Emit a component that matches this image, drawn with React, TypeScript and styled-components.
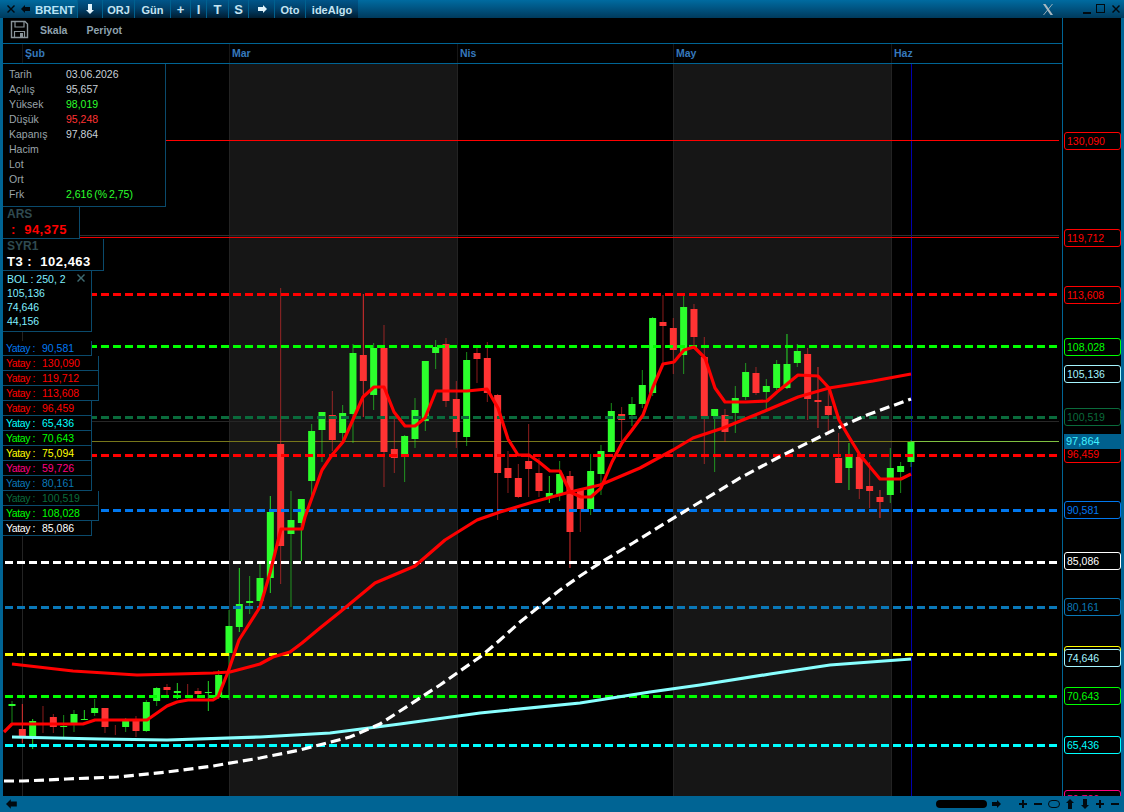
import { createGlobalStyle, styled } from "styled-components";

const GlobalStyle = createGlobalStyle`
    html, body {
        margin: 0;
        padding: 0;
        background: #000;
    }
    #root {
        width: 1124px;
        height: 812px;
        overflow: hidden;
    }
`;

const FONT = `"Liberation Sans", Arial, sans-serif`;
const BLUE = "#006494";
const PLOT_TOP = 64;

const GREEN = "#2cff2c";
const RED = "#ff3333";

// [body top, body bottom, wick top, wick bottom, up?, bright wick?]
type Candle = [number, number, number, number, boolean, boolean?];

const candles: Candle[] = [
    [704, 706, 701, 724, true],
    [729, 736, 704, 743, false, true],
    [721, 737, 719, 749, true, true],
    [733, 733, 706, 733, false],
    [717, 727, 714, 733, false],
    [726, 727, 715, 737, true],
    [714, 723, 710, 732, true],
    [719, 720, 710, 720, true, true],
    [708, 713, 699, 716, true],
    [708, 727, 708, 733, false],
    [735, 735, 725, 735, false],
    [719, 727, 718, 732, true],
    [720, 731, 716, 737, false],
    [702, 731, 700, 732, true],
    [688, 701, 687, 706, true],
    [687, 690, 684, 695, false],
    [691, 693, 683, 699, true, true],
    [695, 695, 684, 695, false],
    [691, 694, 688, 697, false],
    [692, 693, 681, 711, true, true],
    [675, 697, 670, 699, true],
    [626, 653, 610, 700, true],
    [604, 627, 568, 632, true, true],
    [601, 603, 576, 614, true],
    [578, 601, 563, 603, true],
    [512, 578, 496, 593, true, true],
    [444, 546, 288, 584, false],
    [520, 534, 491, 607, true],
    [499, 523, 499, 561, true, true],
    [431, 481, 424, 497, true],
    [412, 430, 412, 462, true],
    [415, 440, 391, 451, false],
    [413, 433, 405, 443, true],
    [353, 414, 344, 443, true],
    [355, 381, 294, 417, false, true],
    [348, 395, 343, 410, true],
    [348, 452, 325, 487, false],
    [449, 458, 418, 473, false],
    [436, 457, 435, 482, true],
    [410, 439, 398, 448, true],
    [361, 421, 361, 431, true],
    [347, 353, 340, 369, true],
    [344, 401, 338, 407, false],
    [399, 432, 381, 448, false],
    [360, 437, 352, 446, true],
    [353, 359, 345, 383, false],
    [358, 393, 342, 402, false],
    [395, 473, 394, 520, false],
    [468, 478, 451, 493, false],
    [478, 497, 464, 498, false],
    [461, 469, 424, 497, false],
    [473, 491, 458, 497, false],
    [493, 497, 476, 503, true, true],
    [474, 494, 461, 501, true],
    [476, 532, 471, 568, false, true],
    [489, 509, 488, 532, false],
    [471, 509, 454, 515, true],
    [451, 474, 445, 495, true],
    [411, 452, 403, 452, true],
    [414, 420, 407, 443, false],
    [404, 415, 397, 426, true],
    [385, 404, 370, 408, true],
    [318, 393, 317, 396, true],
    [322, 326, 295, 365, false],
    [328, 350, 318, 374, false],
    [307, 355, 295, 374, true],
    [309, 337, 304, 347, false],
    [357, 416, 337, 464, false],
    [409, 416, 409, 472, true],
    [415, 432, 409, 442, false],
    [398, 413, 386, 433, true],
    [372, 397, 363, 400, true],
    [373, 393, 367, 395, false],
    [386, 392, 379, 410, true],
    [364, 388, 360, 390, true],
    [364, 388, 334, 389, true, true],
    [351, 363, 344, 367, true],
    [354, 399, 348, 420, false],
    [400, 402, 367, 428, false, true],
    [406, 415, 388, 435, false],
    [458, 483, 433, 483, false],
    [454, 468, 443, 490, true, true],
    [457, 489, 453, 499, false],
    [486, 491, 462, 508, false],
    [497, 502, 490, 518, false, true],
    [468, 495, 448, 503, true],
    [466, 472, 462, 493, true],
    [442, 462, 440, 467, true],
];

const fastMa =
    "4,732 12,724 83,724 95,720 147,720 167,706 177,702 188,700 213,700 218,697 228,672 239,640 260,607 270,573 281,529 302,529 305,517 322,470 332,455 343,442 363,397 374,387 384,387 394,412 405,426 415,426 425,418 436,391 467,391 487,389 498,408 508,439 518,455 529,455 539,462 550,471 560,471 570,492 581,497 591,497 601,488 612,462 622,443 632,430 643,415 653,387 663,364 674,362 684,350 694,347 705,358 715,388 725,402 746,402 767,401 777,392 787,384 798,375 818,376 829,388 839,420 849,437 860,455 870,467 880,479 901,479 911,474";
const slowMa =
    "12,664 73,671 137,675 177,674 213,673 230,672 260,664 273,657 290,652 302,643 320,628 340,612 375,583 415,566 445,540 477,520 500,512 533,502 570,492 600,485 640,468 673,450 693,438 723,428 760,413 798,397 829,388 873,381 911,374";
const whiteMa =
    "4,781 23,781 67,779 117,777 167,772 213,766 260,758 300,750 350,737 380,724 400,711 440,685 480,657 500,640 520,622 540,606 560,590 580,576 600,563 633,543 667,522 700,502 740,478 783,455 840,427 867,415 911,399";
const cyanMa =
    "12,737 100,739 167,740 260,737 330,733 400,724 480,713 580,703 650,692 700,685 770,674 830,665 911,659";

const dashedLevels = [
    { y: 294.5, color: "#ff0000" },
    { y: 346.5, color: "#00ff00" },
    { y: 417.5, color: "#0a6b3c" },
    { y: 455.5, color: "#ff0000" },
    { y: 510.5, color: "#0078f0" },
    { y: 562.5, color: "#ffffff" },
    { y: 607.5, color: "#0a78b8" },
    { y: 654.5, color: "#ffff00" },
    { y: 696.5, color: "#00ff00" },
    { y: 745.5, color: "#00ffff" },
];

// the yellow tag has no text: 74,646 lies right over it in the terminal
const axisLabels = [
    { y: 132, text: "130,090", color: "#ff0000" },
    { y: 229, text: "119,712", color: "#ff0000" },
    { y: 286, text: "113,608", color: "#ff0000" },
    { y: 338, text: "108,028", color: "#00ff00" },
    { y: 365, text: "105,136", color: "#a5f5ff" },
    { y: 408, text: "100,519", color: "#0a6b3c" },
    { y: 445, text: "96,459", color: "#ff0000" },
    { y: 501, text: "90,581", color: "#0078f0" },
    { y: 552, text: "85,086", color: "#ffffff" },
    { y: 598, text: "80,161", color: "#0a78b8" },
    { y: 646, text: "", color: "#ffff00" },
    { y: 649, text: "74,646", color: "#a5f5ff" },
    { y: 687, text: "70,643", color: "#00ff00" },
    { y: 736, text: "65,436", color: "#00ffff" },
    { y: 790, text: "59,726", color: "#ff0080" },
];

const toolButtons = [
    { key: "down", label: "", width: 25 },
    { key: "orj", label: "ORJ", width: 32 },
    { key: "gun", label: "Gün", width: 36 },
    { key: "plus", label: "+", width: 20, large: true },
    { key: "i", label: "I", width: 16, large: true },
    { key: "t", label: "T", width: 22, large: true },
    { key: "s", label: "S", width: 20, large: true },
    { key: "right", label: "", width: 26 },
    { key: "oto", label: "Oto", width: 31 },
    { key: "algo", label: "ideAlgo", width: 53 },
];

const months = [
    { text: "Şub", width: 207 },
    { text: "Mar", width: 228 },
    { text: "Nis", width: 216 },
    { text: "May", width: 218 },
    { text: "Haz", width: 170 },
];

const infoRows = [
    { label: "Tarih", value: "03.06.2026", color: "#c8d0d8" },
    { label: "Açılış", value: "95,657", color: "#c8d0d8" },
    { label: "Yüksek", value: "98,019", color: "#2cff2c" },
    { label: "Düşük", value: "95,248", color: "#ff3333" },
    { label: "Kapanış", value: "97,864", color: "#c8d0d8" },
    { label: "Hacim", value: "", color: "#c8d0d8" },
    { label: "Lot", value: "", color: "#c8d0d8" },
    { label: "Ort", value: "", color: "#c8d0d8" },
    { label: "Frk", value: "2,616 (% 2,75)", color: "#2cff2c" },
];

const yatayRows = [
    { value: "90,581", color: "#0078f0", width: 89 },
    { value: "130,090", color: "#ff0000", width: 96 },
    { value: "119,712", color: "#ff0000", width: 96 },
    { value: "113,608", color: "#ff0000", width: 96 },
    { value: "96,459", color: "#ff0000", width: 89 },
    { value: "65,436", color: "#00ffff", width: 89 },
    { value: "70,643", color: "#00ff00", width: 89 },
    { value: "75,094", color: "#ffff00", width: 89 },
    { value: "59,726", color: "#ff0080", width: 89 },
    { value: "80,161", color: "#0a78b8", width: 89 },
    { value: "100,519", color: "#0a6b3c", width: 96 },
    { value: "108,028", color: "#00ff00", width: 96 },
    { value: "85,086", color: "#ffffff", width: 89 },
];

const Frame = styled.div`
    width: 1124px;
    height: 812px;
    display: flex;
    flex-direction: column;
    background: ${BLUE};
    font-family: ${FONT};
    overflow: hidden;
`;

const TitleBar = styled.div`
    height: 18px;
    flex: none;
    display: flex;
    align-items: stretch;
    padding-left: 3px;
    background: linear-gradient(#006ba0, #00507c 55%, #003a5c);
`;

const GlyphButton = styled.div`
    width: 15px;
    display: flex;
    align-items: center;
    justify-content: center;
    flex: none;
`;

const Symbol = styled.div`
    width: 44px;
    flex: none;
    padding-left: 2px;
    box-sizing: border-box;
    font-size: 11.5px;
    font-weight: bold;
    line-height: 20px;
    color: #b8e4f8;
`;

const ToolButton = styled.div<{ $width: number; $large?: boolean }>`
    width: ${(p) => p.$width}px;
    flex: none;
    box-sizing: border-box;
    text-align: center;
    font-size: ${(p) => (p.$large ? "13px" : "11px")};
    font-weight: bold;
    line-height: 20px;
    color: #c4e4f2;
    border-left: 1px solid #00618f;
    background: linear-gradient(#00568a, #013f68 50%, #001c30);
`;

const WindowControls = styled.div`
    margin-left: auto;
    display: flex;
    align-items: center;
    gap: 5px;
    padding-right: 3px;
`;

const MinimizeIcon = styled.svg`
    margin-left: 24px;
`;

const Body = styled.div`
    flex: 1;
    min-height: 0;
    display: flex;
    margin: 0 3px;
    background: #000;
`;

const ChartColumn = styled.div`
    width: 1059px;
    flex: none;
    display: flex;
    flex-direction: column;
    border-right: 1px solid ${BLUE};
`;

const ChartToolbar = styled.div`
    height: 26px;
    flex: none;
    display: flex;
    align-items: center;
    padding: 0 0 2px 7px;
    border-bottom: 1px solid ${BLUE};
    box-sizing: border-box;
`;

const ToolbarItem = styled.span`
    font-size: 10.5px;
    font-weight: bold;
    color: #8ea2ae;
    margin-left: 19px;

    &:first-of-type {
        margin-left: 11px;
    }
`;

const DateAxis = styled.div`
    height: 20px;
    flex: none;
    display: flex;
    padding-left: 19px;
    border-bottom: 1px solid ${BLUE};
    box-sizing: border-box;
`;

const Month = styled.div<{ $width: number }>`
    width: ${(p) => p.$width}px;
    flex: none;
    box-sizing: border-box;
    border-left: 1px solid #161616;
    padding-left: 2px;
    font-size: 10.5px;
    font-weight: bold;
    line-height: 19px;
    color: #3678bc;
`;

const Plot = styled.div`
    flex: 1;
    min-height: 0;
    position: relative;
    overflow: hidden;
`;

const ChartSvg = styled.svg`
    position: absolute;
    left: -3px;
    top: -${PLOT_TOP}px;
    display: block;
`;

const Overlay = styled.div`
    position: absolute;
    left: 0;
    top: 0;
    display: flex;
    flex-direction: column;
    align-items: flex-start;
`;

const InfoPanel = styled.div`
    width: 163px;
    height: 143px;
    box-sizing: border-box;
    padding: 3px 0 0 6px;
    background: #000;
    border: 1px solid #0a4a6c;
    border-width: 0 1px 1px 0;
`;

const InfoRow = styled.div`
    display: grid;
    grid-template-columns: 57px 1fr;
    height: 15px;
    font-size: 10.5px;
    line-height: 15px;
    color: #9aa4aa;
`;

const InfoValue = styled.span<{ $color: string }>`
    color: ${(p) => p.$color};
    word-spacing: -1px;
`;

const Legend = styled.div<{ $width: number; $height: number }>`
    width: ${(p) => p.$width}px;
    height: ${(p) => p.$height}px;
    box-sizing: border-box;
    padding-left: 4px;
    background: #000;
    border: 1px solid #0a4a6c;
    border-width: 0 1px 1px 0;
`;

const LegendName = styled.div`
    font-size: 12px;
    font-weight: bold;
    line-height: 15px;
    color: #2f4a50;
`;

const LegendValue = styled.div<{ $color: string }>`
    font-size: 13px;
    font-weight: bold;
    line-height: 16px;
    white-space: pre;
    letter-spacing: 0.5px;
    color: ${(p) => p.$color};
`;

const BolPanel = styled.div`
    position: relative;
    width: 89px;
    height: 61px;
    box-sizing: border-box;
    padding: 1px 0 0 4px;
    background: #000;
    border: 1px solid #0a4a6c;
    border-width: 0 1px 1px 0;
    font-size: 10.5px;
    line-height: 14px;
    color: #7feeff;
`;

const CloseMark = styled.svg`
    position: absolute;
    right: 5px;
    top: 2px;
`;

const YatayList = styled.div`
    margin-top: 9px;
    display: flex;
    flex-direction: column;
`;

const YatayRow = styled.div<{ $color: string; $width: number }>`
    width: ${(p) => p.$width}px;
    height: 15px;
    box-sizing: border-box;
    display: flex;
    padding-left: 3px;
    background: #000;
    border: 1px solid #0a4a6c;
    border-width: 0 1px 1px 0;
    font-size: 10.5px;
    line-height: 14px;
    color: ${(p) => p.$color};
`;

const YatayLabel = styled.span`
    width: 36px;
    flex: none;
    letter-spacing: -0.4px;
`;

const Axis = styled.div`
    flex: 1;
    position: relative;
    overflow: hidden;
`;

const PriceTag = styled.div<{ $color: string }>`
    position: absolute;
    left: 1px;
    width: 57px;
    height: 18px;
    box-sizing: border-box;
    padding-left: 2px;
    background: #000;
    border: 1px solid ${(p) => p.$color};
    border-radius: 3px;
    font-size: 10.5px;
    line-height: 16px;
    color: ${(p) => p.$color};
`;

const LastPrice = styled.div`
    position: absolute;
    left: 1px;
    top: 416px;
    width: 57px;
    height: 15px;
    padding-left: 2px;
    box-sizing: border-box;
    background: #00608e;
    font-size: 11px;
    line-height: 15px;
    color: #40f0ff;
`;

const StatusBar = styled.div`
    height: 16px;
    flex: none;
    display: flex;
    align-items: center;
    padding: 0 4px 0 6px;
    background: ${BLUE};
`;

const ScrollThumb = styled.div`
    width: 51px;
    height: 8px;
    margin-left: auto;
    border-radius: 4px;
    background: #000;
`;

const StatusIcons = styled.div`
    display: flex;
    align-items: center;
    gap: 5px;
    margin-left: 4px;
`;

const Spacer = styled.div`
    width: 7px;
`;

const GlyphSvg = styled.svg`
    display: block;
    flex: none;
`;

const BarGlyph = ({ d, size = 10 }: { d: string; size?: number }) => (
    <GlyphSvg width={size} height={size} viewBox="0 0 10 10">
        <path d={d} fill="#010a10" />
    </GlyphSvg>
);

const ARROW_LEFT = "M0 5 L4 1 L4 3 L9 3 L9 7 L4 7 L4 9 Z";
const ARROW_RIGHT = "M10 5 L6 1 L6 3 L1 3 L1 7 L6 7 L6 9 Z";
const ARROW_UP = "M5 0 L9 4 L7 4 L7 10 L3 10 L3 4 L1 4 Z";
const ARROW_DOWN = "M5 10 L9 6 L7 6 L7 0 L3 0 L3 6 L1 6 Z";
const PLUS = "M4 1 H6 V4 H9 V6 H6 V9 H4 V6 H1 V4 H4 Z";
const MINUS = "M1 4 H9 V6 H1 Z";
const CROSS = "M1 2 L2 1 L5 4 L8 1 L9 2 L6 5 L9 8 L8 9 L5 6 L2 9 L1 8 L4 5 Z";

const SaveIcon = () => (
    <svg width="19" height="19" viewBox="0 0 19 19" fill="none" stroke="#8a949a">
        <path d="M1.5 1.5 H15 L17.5 4 V17.5 H1.5 Z" strokeWidth="1.4" />
        <path d="M5 1.5 V7 H14 V1.5" strokeWidth="1.2" />
        <path d="M4.5 17.5 V11.5 H14.5 V17.5" strokeWidth="1.2" />
        <path d="M10 13 H13 V17 H10 Z" fill="#8a949a" stroke="none" />
    </svg>
);

const XMark = () => (
    <svg width="12" height="13" viewBox="0 0 12 13">
        <path d="M1 1 H3.5 L11 12 H8.5 Z" fill="#a8b8c0" />
        <path d="M10.5 1 L1.5 12" stroke="#a8b8c0" strokeWidth="0.9" fill="none" />
    </svg>
);

const Chart = () => (
    <ChartSvg width={1059} height={812} viewBox="0 0 1059 812">
        <rect x={229} y={64} width={228} height={732} fill="#161616" />
        <rect x={673} y={64} width={218} height={732} fill="#161616" />
        <g shapeRendering="crispEdges">
            {[22.5, 229, 457, 673, 891].map((x) => (
                <line key={x} x1={x} x2={x} y1={64} y2={796} stroke="#232323" />
            ))}
            <line x1={911.5} x2={911.5} y1={64} y2={796} stroke="#0000b0" />
            <line x1={5} x2={1061} y1={235.5} y2={235.5} stroke="#2e2e2e" />
            <line x1={5} x2={1061} y1={421.5} y2={421.5} stroke="#262626" />
            <line x1={5} x2={1061} y1={140.5} y2={140.5} stroke="#ff0000" />
            <line x1={5} x2={1061} y1={237.5} y2={237.5} stroke="#f00000" />
            <line x1={5} x2={911} y1={441.5} y2={441.5} stroke="#77771a" />
            <line x1={911} x2={1061} y1={441.5} y2={441.5} stroke="#7fc040" />
        </g>

        {candles.map(([top, bottom, wickTop, wickBottom, up, bright], i) => {
            const x = 12 + i * 10.333;
            const color = up ? GREEN : RED;
            const isThin = bottom - top < 1;
            return (
                <g key={i}>
                    <line
                        x1={x}
                        x2={x}
                        y1={wickTop}
                        y2={wickBottom}
                        stroke={color}
                        strokeOpacity={bright ? 0.85 : 0.55}
                        strokeWidth={1}
                    />
                    {!isThin && (
                        <rect
                            x={x - 3.5}
                            y={top}
                            width={7}
                            height={bottom - top}
                            fill={color}
                        />
                    )}
                </g>
            );
        })}

        {dashedLevels.map((level) => (
            <line
                key={level.y}
                x1={5}
                x2={1061}
                y1={level.y}
                y2={level.y}
                stroke={level.color}
                strokeWidth={3}
                strokeDasharray="8 4"
            />
        ))}

        <polyline points={cyanMa} fill="none" stroke="#88ffff" strokeWidth={3.2} />
        <polyline points={whiteMa} fill="none" stroke="#ffffff" strokeWidth={3.2} strokeDasharray="10 5" />
        <polyline points={slowMa} fill="none" stroke="#ff0000" strokeWidth={3.2} strokeLinejoin="round" />
        <polyline points={fastMa} fill="none" stroke="#ff0000" strokeWidth={3.2} strokeLinejoin="round" />
    </ChartSvg>
);

const App = () => (
    <Frame>
        <GlobalStyle />
        <TitleBar>
            <GlyphButton>
                <BarGlyph d={CROSS} />
            </GlyphButton>
            <GlyphButton>
                <BarGlyph d={ARROW_LEFT} />
            </GlyphButton>
            <Symbol>BRENT</Symbol>
            {toolButtons.map((b) => (
                <ToolButton key={b.key} $width={b.width} $large={b.large}>
                    {b.key === "down" && (
                        <svg width="10" height="10" viewBox="0 0 10 10">
                            <path d={ARROW_DOWN} fill="#dff2fa" />
                        </svg>
                    )}
                    {b.key === "right" && (
                        <svg width="10" height="10" viewBox="0 0 10 10">
                            <path d={ARROW_RIGHT} fill="#dff2fa" />
                        </svg>
                    )}
                    {b.label}
                </ToolButton>
            ))}
            <WindowControls>
                <XMark />
                <MinimizeIcon width="8" height="10" viewBox="0 0 8 10">
                    <path d="M0 8 H8 V10 H0 Z" fill="#010a10" />
                </MinimizeIcon>
                <svg width="10" height="10" viewBox="0 0 10 10">
                    <rect x="0.5" y="0.5" width="8" height="8" fill="none" stroke="#010a10" />
                </svg>
                <BarGlyph d={CROSS} />
            </WindowControls>
        </TitleBar>
        <Body>
            <ChartColumn>
                <ChartToolbar>
                    <SaveIcon />
                    <ToolbarItem>Skala</ToolbarItem>
                    <ToolbarItem>Periyot</ToolbarItem>
                </ChartToolbar>
                <DateAxis>
                    {months.map((m) => (
                        <Month key={m.text} $width={m.width}>
                            {m.text}
                        </Month>
                    ))}
                </DateAxis>
                <Plot>
                    <Chart />
                    <Overlay>
                        <InfoPanel>
                            {infoRows.map((row) => (
                                <InfoRow key={row.label}>
                                    <span>{row.label}</span>
                                    <InfoValue $color={row.color}>{row.value}</InfoValue>
                                </InfoRow>
                            ))}
                        </InfoPanel>
                        <Legend $width={77} $height={32}>
                            <LegendName>ARS</LegendName>
                            <LegendValue $color="#ff0000">{" :  94,375"}</LegendValue>
                        </Legend>
                        <Legend $width={101} $height={32}>
                            <LegendName>SYR1</LegendName>
                            <LegendValue $color="#ffffff">{"T3 :  102,463"}</LegendValue>
                        </Legend>
                        <BolPanel>
                            BOL : 250, 2
                            <CloseMark width="10" height="10" viewBox="0 0 10 10">
                                <path d={CROSS} fill="#3e6a70" />
                            </CloseMark>
                            <div>105,136</div>
                            <div>74,646</div>
                            <div>44,156</div>
                        </BolPanel>
                        <YatayList>
                            {yatayRows.map((row) => (
                                <YatayRow key={row.value} $color={row.color} $width={row.width}>
                                    <YatayLabel>Yatay :</YatayLabel>
                                    {row.value}
                                </YatayRow>
                            ))}
                        </YatayList>
                    </Overlay>
                </Plot>
            </ChartColumn>
            <Axis>
                {axisLabels.map((tag) => (
                    <PriceTag key={tag.y} $color={tag.color} style={{ top: tag.y - 18 }}>
                        {tag.text}
                    </PriceTag>
                ))}
                <LastPrice>97,864</LastPrice>
            </Axis>
        </Body>
        <StatusBar>
            <BarGlyph d={ARROW_LEFT} size={12} />
            <ScrollThumb />
            <StatusIcons>
                <BarGlyph d={ARROW_RIGHT} />
                <Spacer />
                <BarGlyph d={PLUS} />
                <BarGlyph d={MINUS} />
                <GlyphSvg width="12" height="8" viewBox="0 0 12 8">
                    <rect x="0.5" y="0.5" width="11" height="7" rx="3.5" fill="none" stroke="#010a10" />
                </GlyphSvg>
                <BarGlyph d={ARROW_UP} />
                <BarGlyph d={ARROW_DOWN} />
                <BarGlyph d={PLUS} />
                <BarGlyph d={MINUS} />
            </StatusIcons>
        </StatusBar>
    </Frame>
);

export default App;
